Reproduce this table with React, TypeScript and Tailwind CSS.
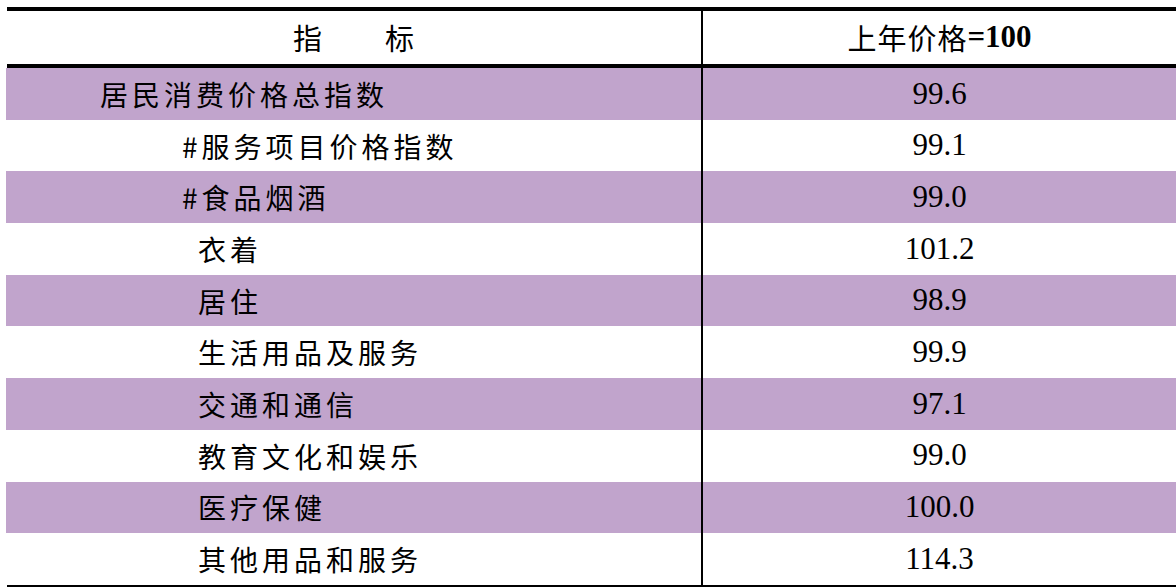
const ROWS: { name: string; value: string; indent: 0 | 1 | 2 }[] = [
  { name: "居民消费价格总指数", value: "99.6", indent: 0 },
  { name: "#服务项目价格指数", value: "99.1", indent: 1 },
  { name: "#食品烟酒", value: "99.0", indent: 1 },
  { name: "衣着", value: "101.2", indent: 2 },
  { name: "居住", value: "98.9", indent: 2 },
  { name: "生活用品及服务", value: "99.9", indent: 2 },
  { name: "交通和通信", value: "97.1", indent: 2 },
  { name: "教育文化和娱乐", value: "99.0", indent: 2 },
  { name: "医疗保健", value: "100.0", indent: 2 },
  { name: "其他用品和服务", value: "114.3", indent: 2 },
];

const CJK = "font-['Noto_Sans_CJK_SC',sans-serif]";
const NUM = "font-['Liberation_Serif','Noto_Sans_CJK_SC',serif]";

const PAD = ["pl-[94px]", "pl-[176px]", "pl-[192px]"];

export default function App() {
  return (
    <div className="min-h-[587px] w-full overflow-hidden bg-white pt-[7px] pl-[6px] text-black">
      <div className="w-[1170px]">
        <div className="ml-[1px] h-[4px] bg-black" />
        <div className="flex h-[53px]">
          <div className={`flex w-[695px] items-center justify-center gap-[63px] text-[29px] ${CJK}`}>
            <span>指</span>
            <span>标</span>
          </div>
          <div className="w-[2px] bg-black" />
          <div className="flex flex-1 items-center justify-center text-[29px]">
            <span className={`${CJK} tracking-[1px]`}>上年价格</span>
            <span className={`${NUM} text-[31px] font-bold`}>=100</span>
          </div>
        </div>
        <div className="ml-[1px] h-[4px] bg-black" />
        {ROWS.map((r, i) => (
          <div key={r.name} className={`flex h-[51.7px] ${i % 2 === 0 ? "bg-[#c1a4cc]" : "bg-white"}`}>
            <div className={`flex w-[695px] items-center ${PAD[r.indent]} text-[28px] tracking-[4px] ${CJK}`}>
              {r.name}
            </div>
            <div className="w-[2px] bg-black" />
            <div className={`flex flex-1 items-center justify-center text-[31px] ${NUM}`}>{r.value}</div>
          </div>
        ))}
        <div className="ml-[1px] h-[2px] bg-black" />
      </div>
    </div>
  );
}
